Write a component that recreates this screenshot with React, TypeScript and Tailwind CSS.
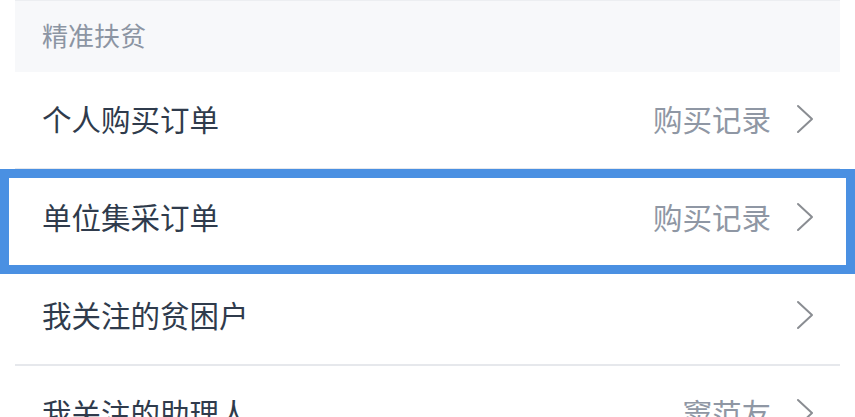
type Row = {
  label: string;
  extra?: string;
};

const rows: Row[] = [
  { label: "个人购买订单", extra: "购买记录" },
  { label: "单位集采订单", extra: "购买记录" },
  { label: "我关注的贫困户" },
  { label: "我关注的助理人", extra: "窦范友" },
];

function Chevron() {
  return (
    <svg width="18" height="30" viewBox="0 0 18 30" fill="none" className="shrink-0">
      <path d="M2 2 L16 15 L2 28" stroke="#8a8d92" strokeWidth="2" strokeLinecap="round" strokeLinejoin="round" />
    </svg>
  );
}

function ListRow({ label, extra, active }: Row & { active?: boolean }) {
  return (
    <div className="relative flex h-[98px] items-center border-b-2 border-[#e6e8ec] pb-[3px] pl-[27px] pr-[26px]">
      <span className="flex-1 text-[29.5px] leading-none text-[#2f3b4c]">{label}</span>
      {extra && <span className="mr-[25px] text-[29.5px] leading-none text-[#8f97a4]">{extra}</span>}
      <Chevron />
      {active && (
        <div className="pointer-events-none absolute left-[-15px] right-[-15px] top-[-1px] h-[105px] border-[9px] border-[#4a90e2]" />
      )}
    </div>
  );
}

export default function App() {
  return (
    <div
      className="h-[417px] w-[855px] overflow-hidden bg-white"
      style={{ fontFamily: '"Noto Sans CJK SC", "Noto Sans", sans-serif' }}
    >
      <div className="mx-[15px]">
        <div className="flex h-[72px] items-center border-t border-[#eceef1] bg-[#f7f8fa] pb-[4px] pl-[27px]">
          <span className="text-[26px] leading-none text-[#8c95a3]">精准扶贫</span>
        </div>
        {rows.map((r, i) => (
          <ListRow key={r.label} {...r} active={i === 1} />
        ))}
      </div>
    </div>
  );
}
